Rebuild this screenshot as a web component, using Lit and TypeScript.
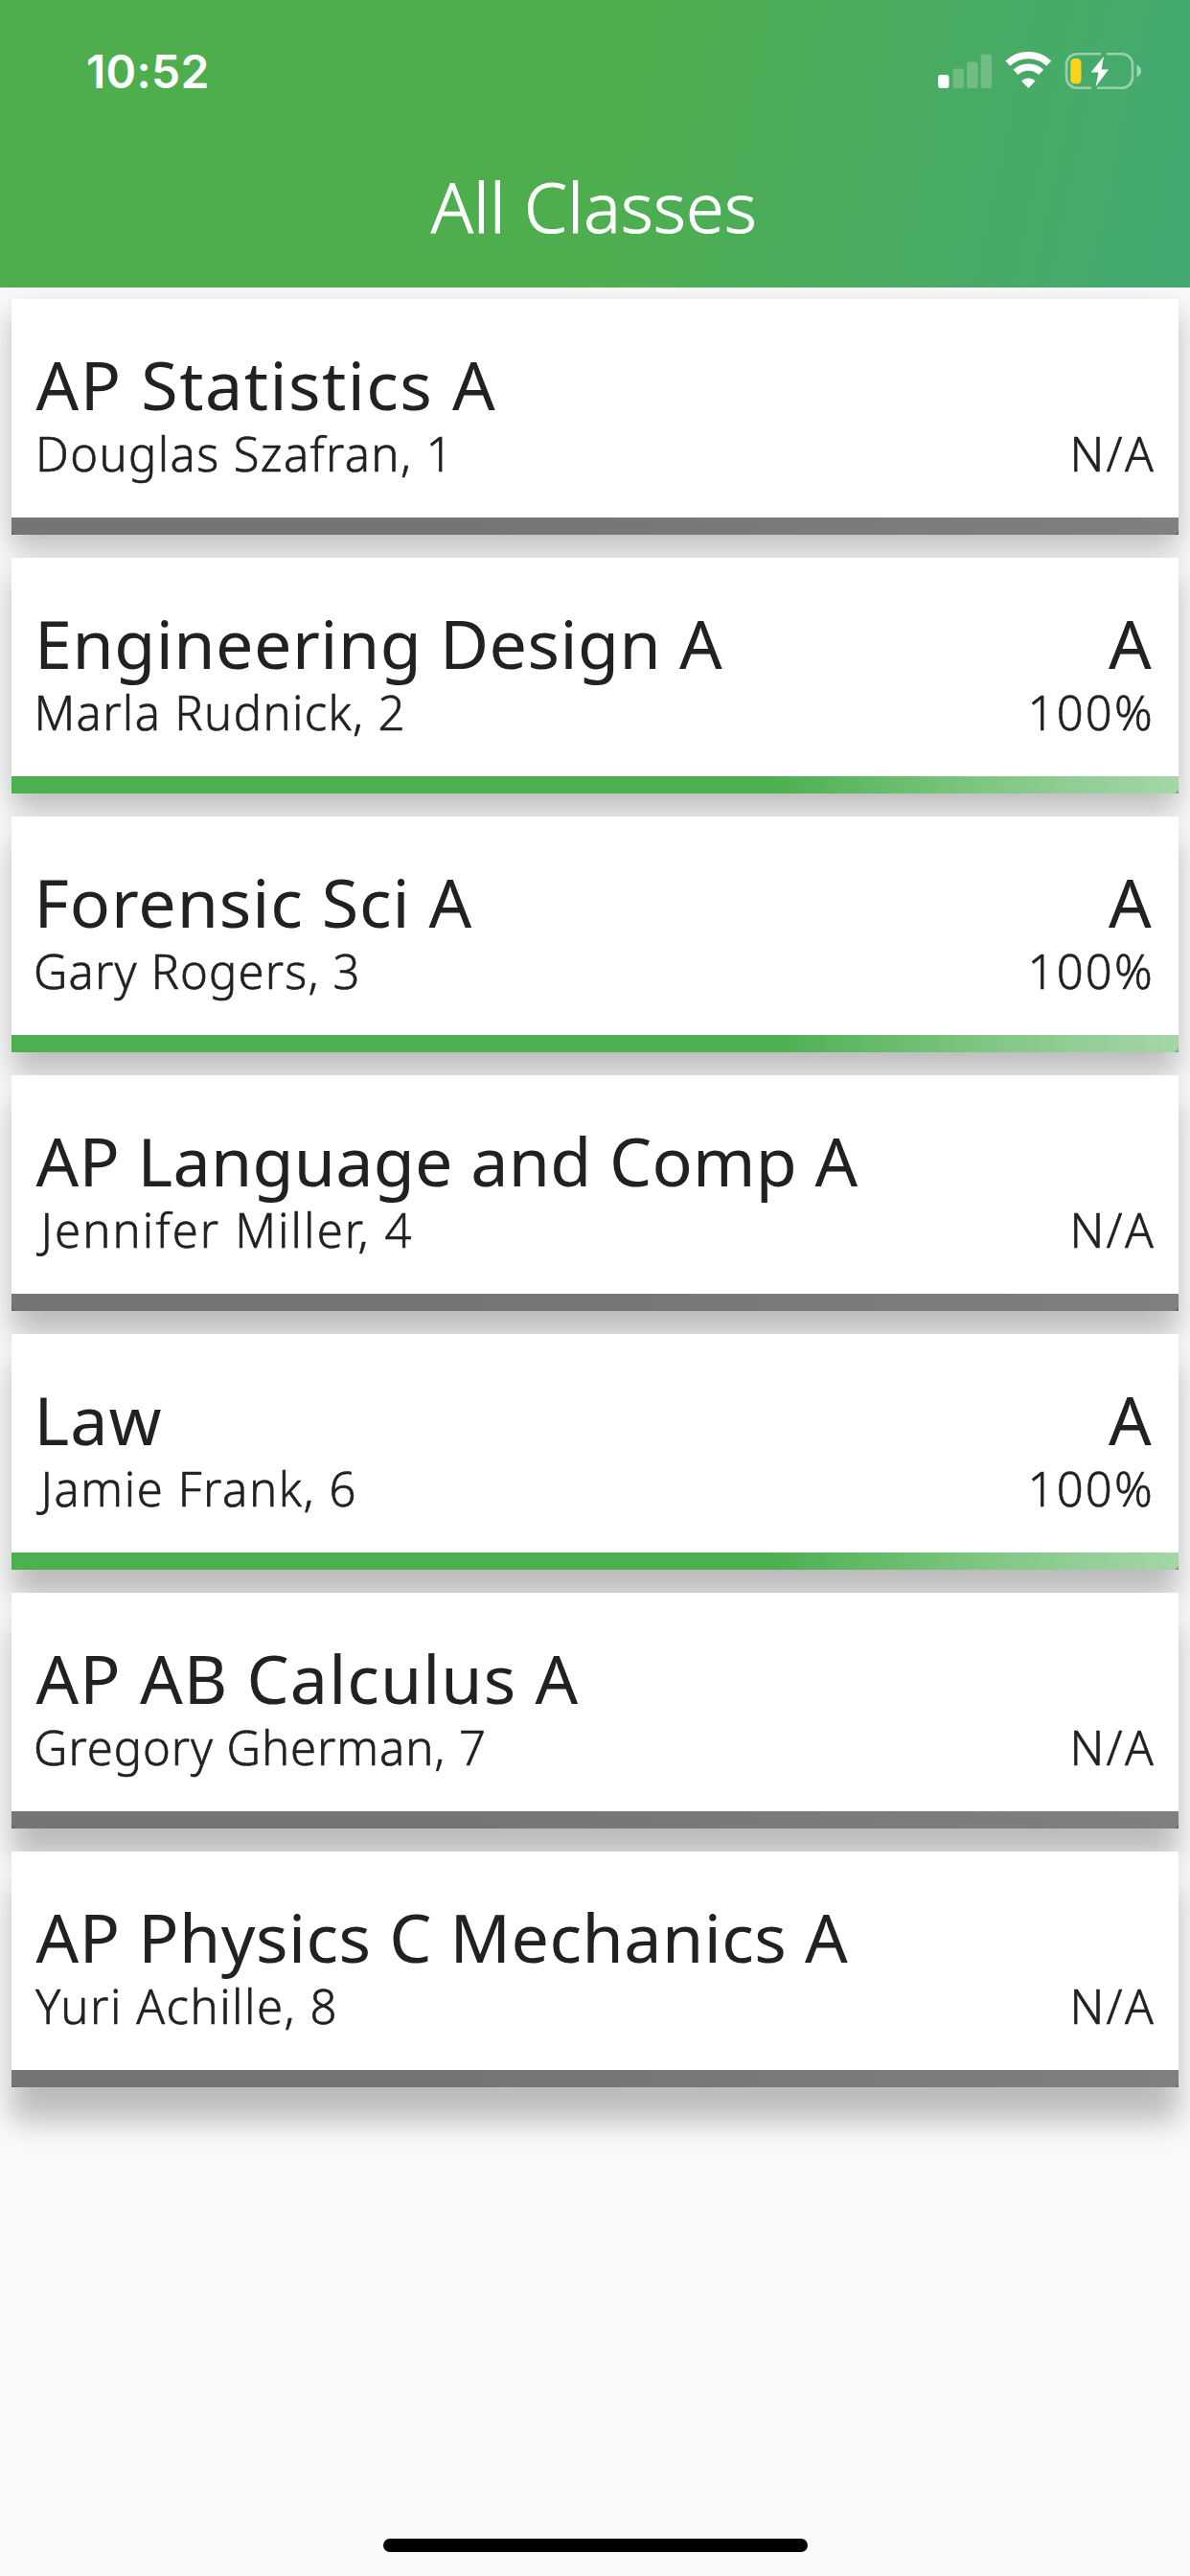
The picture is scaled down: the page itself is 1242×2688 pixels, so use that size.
import { LitElement, html, css, svg, nothing } from "lit";
import { customElement, property } from "lit/decorators.js";
import { classMap } from "lit/directives/class-map.js";

type Span = { text: string; width: number; inset: number };

interface ClassRow {
  title: Span;
  teacher: Span;
  grade?: Span;
  score: Span;
}

const letterA: Span = { text: "A", width: 46, inset: 3 };
const full: Span = { text: "100%", width: 124.5, inset: 5 };
const none: Span = { text: "N/A", width: 83.5, inset: 2 };

const classes: ClassRow[] = [
  {
    title: { text: "AP Statistics A", width: 479.5, inset: 1.5 },
    teacher: { text: "Douglas Szafran, 1", width: 420.5, inset: 5 },
    score: none,
  },
  {
    title: { text: "Engineering Design A", width: 712, inset: 6 },
    teacher: { text: "Marla Rudnick, 2", width: 380, inset: 3.5 },
    grade: letterA,
    score: full,
  },
  {
    title: { text: "Forensic Sci A", width: 451, inset: 5.5 },
    teacher: { text: "Gary Rogers, 3", width: 334.5, inset: 2 },
    grade: letterA,
    score: full,
  },
  {
    title: { text: "AP Language and Comp A", width: 858, inset: 1.5 },
    teacher: { text: "Jennifer Miller, 4", width: 392, inset: 1.5 },
    score: none,
  },
  {
    title: { text: "Law", width: 127, inset: 5.5 },
    teacher: { text: "Jamie Frank, 6", width: 332, inset: 1.5 },
    grade: letterA,
    score: full,
  },
  {
    title: { text: "AP AB Calculus A", width: 566, inset: 1.5 },
    teacher: { text: "Gregory Gherman, 7", width: 467, inset: 2 },
    score: none,
  },
  {
    title: { text: "AP Physics C Mechanics A", width: 847.5, inset: 1.5 },
    teacher: { text: "Yuri Achille, 8", width: 312.5, inset: 1 },
    score: none,
  },
];

/* One line of text tracked so that its ink fills exactly the given width. */
@customElement("tracked-text")
class TrackedText extends LitElement {
  @property({ attribute: false }) span!: Span;
  @property() side: "start" | "end" = "start";

  static styles = css`
    :host {
      display: block;
      white-space: nowrap;
    }
  `;

  updated() {
    const own = getComputedStyle(this);
    const pen = document.createElement("canvas").getContext("2d")!;
    pen.font = `${own.fontWeight} ${own.fontSize} ${own.fontFamily}`;
    const { text, width, inset } = this.span;
    const m = pen.measureText(text);
    const ink = m.actualBoundingBoxLeft + m.actualBoundingBoxRight;
    const gaps = Math.max(text.length - 1, 1);
    this.style.letterSpacing = text.length > 1 ? `${(width - ink) / gaps}px` : "0";
    this.style.width = `${width}px`;
    this.style.textIndent = `${m.actualBoundingBoxLeft}px`;
    this.style.marginLeft = this.side === "start" ? `${inset}px` : "0";
    this.style.marginRight = this.side === "end" ? `${inset}px` : "0";
  }

  render() {
    return html`${this.span.text}`;
  }
}

@customElement("class-card")
class ClassCard extends LitElement {
  @property({ attribute: false }) row!: ClassRow;
  @property({ type: Number }) lift = 15;

  static styles = css`
    :host {
      display: block;
    }
    .card {
      display: flex;
      flex-direction: column;
      height: 246px;
      box-sizing: border-box;
      background: #fff;
      color: #212121;
    }
    .body {
      flex: 1;
      padding: 49px 24px 0;
      display: flex;
      flex-direction: column;
      gap: 2px;
    }
    .line {
      display: flex;
      justify-content: space-between;
    }
    .title {
      font-size: 70px;
      line-height: 80px;
      height: 80px;
    }
    .detail {
      font-size: 49px;
      font-weight: 300;
      -webkit-text-stroke: 0.6px currentColor;
      line-height: 60px;
      height: 60px;
    }
    .bar {
      height: 18px;
      background: #666;
    }
    .bar.graded {
      background: #6fae72;
    }
    .fill {
      height: 100%;
      border-radius: 0 0 6px 6px;
      background: linear-gradient(90deg, #757575 40%, #808080);
    }
    .graded .fill {
      border-radius: 0 0 6px 0;
      background: linear-gradient(90deg, #4caf50 65%, #81c784 84%, #a5d6a7);
    }
  `;

  render() {
    const { title, teacher, grade, score } = this.row;
    return html`
      <div class="card" style="box-shadow: 0 ${this.lift}px 30px rgba(0, 0, 0, 0.25)">
        <div class="body">
          <div class="line title">
            <tracked-text .span=${title}></tracked-text>
            ${grade ? html`<tracked-text side="end" .span=${grade}></tracked-text>` : nothing}
          </div>
          <div class="line detail">
            <tracked-text .span=${teacher}></tracked-text>
            <tracked-text side="end" .span=${score}></tracked-text>
          </div>
        </div>
        <div class=${classMap({ bar: true, graded: !!grade })}><div class="fill"></div></div>
      </div>
    `;
  }
}

const signal = svg`
  <rect x="0" y="24" width="11.5" height="14" rx="3" fill="#fff" />
  <g fill="#fff" fill-opacity=".22">
    <rect x="15.5" y="17.5" width="11.5" height="20.5" rx="3" />
    <rect x="30" y="10.5" width="11.5" height="27.5" rx="3" />
    <rect x="44.7" y="2.5" width="11.5" height="35.5" rx="3" />
  </g>`;

const wifi = svg`
  <g fill="none" stroke="#fff" stroke-width="7.2">
    <path d="M72.8 12.2 A31.5 31.5 0 0 1 115.8 12.2" />
    <path d="M81 21.4 A19.4 19.4 0 0 1 107.6 21.4" />
  </g>
  <path d="M94.3 38 L87 30.4 A10.5 10.5 0 0 1 101.6 30.4 Z" fill="#fff" />`;

const battery = svg`
  <g fill="none" stroke="#fff" stroke-opacity=".45" stroke-width="2.6">
    <path d="M170 2.3 H145 A11 11 0 0 0 134 13.3 V26.7 A11 11 0 0 0 145 37.7 H160" />
    <path d="M176 2.3 H192 A11 11 0 0 1 203 13.3 V26.7 A11 11 0 0 1 192 37.7 H166" />
  </g>
  <path d="M207.5 13.5 Q212 16 212 20 Q212 24 207.5 26.5 Z" fill="#fff" fill-opacity=".5" />
  <rect x="138.3" y="7" width="11.2" height="26.5" rx="4.5" fill="#fcd21c" />
  <path d="M173 5 L159.5 21.5 H167.5 L164.5 36.5 L178 18.5 H170.5 Z" fill="#fff" />`;

@customElement("app-root")
class AppRoot extends LitElement {
  static styles = css`
    :host {
      display: block;
      font-family: "Noto Sans", "Open Sans", sans-serif;
    }
    .screen {
      display: flex;
      flex-direction: column;
      width: 1242px;
      height: 2688px;
      box-sizing: border-box;
      background: #fafafa;
      overflow: hidden;
    }
    .header {
      position: relative;
      z-index: 1;
      height: 300px;
      flex: none;
      display: flex;
      flex-direction: column;
      color: #fff;
      background: linear-gradient(102deg, #4eae4e 50%, #43a972);
    }
    .status {
      display: flex;
      justify-content: space-between;
      height: 132px;
      padding: 45px 49px 0 92px;
      box-sizing: border-box;
    }
    .clock {
      font: 600 48px/60px Inter, sans-serif;
    }
    .icons {
      width: 214px;
      height: 40px;
      margin-top: 9px;
      flex: none;
    }
    .heading {
      display: flex;
      justify-content: center;
      padding-right: 5px;
      margin-top: 38px;
      font-size: 72px;
      line-height: 90px;
      font-weight: 300;
      -webkit-text-stroke: 1px currentColor;
    }
    .list {
      flex: 1;
      display: flex;
      flex-direction: column;
      gap: 24px;
      padding: 12px 12px 0;
    }
    .home {
      flex: none;
      align-self: center;
      width: 443px;
      height: 14px;
      margin-bottom: 25px;
      border-radius: 7px;
      background: #000;
    }
  `;

  render() {
    return html`
      <div class="screen">
        <div class="header">
          <div class="status">
            <tracked-text class="clock" .span=${{ text: "10:52", width: 124.5, inset: 0 }}></tracked-text>
            <svg class="icons" viewBox="0 0 214 40">${signal}${wifi}${battery}</svg>
          </div>
          <div class="heading">
            <tracked-text .span=${{ text: "All Classes", width: 337, inset: 0 }}></tracked-text>
          </div>
        </div>
        <div class="list">
          ${classes.map((row, i) => html`<class-card .row=${row} .lift=${15 + i * 3.4}></class-card>`)}
        </div>
        <div class="home"></div>
      </div>
    `;
  }
}
